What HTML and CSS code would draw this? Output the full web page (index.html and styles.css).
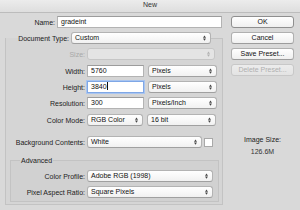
FILE: index.html
```html
<!DOCTYPE html>
<html>
<head>
<meta charset="utf-8">
<link rel="stylesheet" href="styles.css">
</head>
<body>
<div class="window">
  <div class="titlebar">New</div>
  <div class="content">
    <div class="form">
      <div class="name-row">
        <span class="lbl name-lbl">Name:</span>
        <div class="input name-input">gradeint</div>
      </div>
      <fieldset class="group doc">
        <legend class="doc-legend">
          <span class="lbl doc-lbl">Document Type:</span>
          <span class="select doctype">Custom<svg class="arr" viewBox="0 0 4 7"><path d="M0 3L2 0L4 3Z M0 4L2 7L4 4Z"/></svg></span>
        </legend>
        <div class="rows">
          <div class="row">
            <span class="lbl dim">Size:</span>
            <span class="select disabled w-size"><svg class="arr" viewBox="0 0 4 7"><path d="M0 3L2 0L4 3Z M0 4L2 7L4 4Z"/></svg></span>
          </div>
          <div class="row gap5">
            <span class="lbl">Width:</span>
            <div class="input w-num">5760</div>
            <span class="select w-unit">Pixels<svg class="arr" viewBox="0 0 4 7"><path d="M0 3L2 0L4 3Z M0 4L2 7L4 4Z"/></svg></span>
          </div>
          <div class="row">
            <span class="lbl">Height:</span>
            <div class="input w-num focus">3840<span class="caret"></span></div>
            <span class="select w-unit">Pixels<svg class="arr" viewBox="0 0 4 7"><path d="M0 3L2 0L4 3Z M0 4L2 7L4 4Z"/></svg></span>
          </div>
          <div class="row">
            <span class="lbl">Resolution:</span>
            <div class="input w-num">300</div>
            <span class="select w-unit">Pixels/Inch<svg class="arr" viewBox="0 0 4 7"><path d="M0 3L2 0L4 3Z M0 4L2 7L4 4Z"/></svg></span>
          </div>
          <div class="row gap5">
            <span class="lbl">Color Mode:</span>
            <span class="select w-mode">RGB Color<svg class="arr" viewBox="0 0 4 7"><path d="M0 3L2 0L4 3Z M0 4L2 7L4 4Z"/></svg></span>
            <span class="select w-bit">16 bit<svg class="arr" viewBox="0 0 4 7"><path d="M0 3L2 0L4 3Z M0 4L2 7L4 4Z"/></svg></span>
          </div>
          <div class="row gap10">
            <span class="lbl">Background Contents:</span>
            <span class="select w-bg">White<svg class="arr" viewBox="0 0 4 7"><path d="M0 3L2 0L4 3Z M0 4L2 7L4 4Z"/></svg></span>
            <span class="swatch"></span>
          </div>
        </div>
        <fieldset class="group adv">
          <legend class="adv-legend">Advanced</legend>
          <div class="rows">
            <div class="row">
              <span class="lbl adv-lbl">Color Profile:</span>
              <span class="select w-adv">Adobe RGB (1998)<svg class="arr" viewBox="0 0 4 7"><path d="M0 3L2 0L4 3Z M0 4L2 7L4 4Z"/></svg></span>
            </div>
            <div class="row">
              <span class="lbl adv-lbl">Pixel Aspect Ratio:</span>
              <span class="select w-adv">Square Pixels<svg class="arr" viewBox="0 0 4 7"><path d="M0 3L2 0L4 3Z M0 4L2 7L4 4Z"/></svg></span>
            </div>
          </div>
        </fieldset>
      </fieldset>
    </div>
    <div class="side">
      <button class="btn default">OK</button>
      <button class="btn">Cancel</button>
      <button class="btn">Save Preset...</button>
      <button class="btn disabled">Delete Preset...</button>
      <div class="imgsize">
        <div>Image Size:</div>
        <div class="imgval">126.6M</div>
      </div>
    </div>
  </div>
</div>
</body>
</html>
```

FILE: styles.css
```css
html, body {
  margin: 0;
  padding: 0;
}
body {
  width: 300px;
  height: 210px;
  overflow: hidden;
  background: #d9d9d9;
  font-family: "Liberation Sans", Arial, sans-serif;
  font-size: 7px;
  color: #222;
}
.window {
  width: 300px;
  height: 210px;
}
.titlebar {
  height: 12px;
  line-height: 10px;
  text-align: center;
  color: #333;
  background: linear-gradient(#ececec, #dedede);
  border-bottom: 1px solid #bcbcbc;
}
.content {
  display: flex;
  padding-top: 3px;
}
.form {
  width: 224px;
  flex: none;
}
.lbl {
  text-align: right;
  white-space: nowrap;
  flex: none;
}
.dim {
  color: #a8a8a8;
}
.name-row {
  display: flex;
  align-items: center;
  gap: 2px;
  height: 12px;
}
.name-lbl {
  width: 55px;
}
.input {
  box-sizing: border-box;
  height: 12px;
  line-height: 10px;
  background: #fff;
  border: 1px solid #b3b3b3;
  border-top-color: #9c9c9c;
  padding-left: 3px;
  color: #111;
  flex: none;
  position: relative;
}
.name-input {
  width: 165px;
}
.input.focus {
  border-color: #7fa7e6;
  box-shadow: 0 0 0 1px #a9c5f0;
}
.caret {
  display: inline-block;
  width: 1px;
  height: 8px;
  background: #111;
  vertical-align: -1px;
}
.group {
  margin: 0;
  padding: 0;
  min-width: 0;
  box-sizing: border-box;
  border: 1px solid #c3c3c3;
  background: rgba(0, 0, 0, 0.015);
}
.doc {
  margin: 4px 0 0 5px;
  width: 218px;
  padding-bottom: 2px;
}
.doc-legend {
  display: flex;
  align-items: center;
  gap: 2px;
  padding: 0;
  margin-left: 0;
}
.doc-lbl {
  width: 63px;
}
.select {
  box-sizing: border-box;
  height: 12px;
  line-height: 10px;
  border: 1px solid #b3b3b3;
  border-bottom-color: #a0a0a0;
  border-radius: 3px;
  background: linear-gradient(#ffffff, #f1f1f1);
  padding-left: 3px;
  padding-right: 10px;
  color: #111;
  position: relative;
  flex: none;
  white-space: nowrap;
  overflow: hidden;
}
.arr {
  position: absolute;
  right: 4px;
  top: 2px;
  width: 3px;
  height: 6px;
  fill: #444;
}
.select.disabled {
  background: #e4e4e4;
  border-color: #c6c6c6;
}
.select.disabled .arr {
  fill: #b0b0b0;
}
.doctype {
  width: 140px;
}
.rows {
  display: flex;
  flex-direction: column;
  gap: 4px;
}
.doc > .rows {
  padding-top: 4px;
}
.row {
  display: flex;
  align-items: center;
  gap: 2px;
  height: 12px;
}
.row .lbl {
  width: 79px;
}
.gap5 {
  margin-top: 1px;
}
.gap10 {
  margin-top: 6px;
}
.w-size {
  width: 128px;
}
.w-num {
  width: 57px;
  margin-right: 2px;
}
.w-unit {
  width: 69px;
}
.w-mode {
  width: 56px;
  margin-right: 2px;
}
.w-bit {
  width: 69px;
}
.w-bg {
  width: 115px;
}
.swatch {
  width: 9px;
  height: 9px;
  box-sizing: border-box;
  background: #fff;
  border: 1px solid #a9a9a9;
  flex: none;
}
.adv {
  margin: 8px 0 0 4px;
  width: 209px;
  padding-bottom: 3px;
}
.adv-legend {
  padding: 0 1px;
  margin-left: 9px;
  line-height: 9px;
}
.adv > .rows {
  padding-top: 5px;
}
.adv .row .lbl {
  width: 74px;
}
.w-adv {
  width: 126px;
}
.side {
  margin-left: 7px;
  width: 63px;
  display: flex;
  flex-direction: column;
  gap: 4px;
}
.btn {
  box-sizing: border-box;
  height: 12px;
  width: 63px;
  margin: 0;
  padding: 0;
  font-family: inherit;
  font-size: 7px;
  line-height: 10px;
  color: #111;
  border: 1px solid #b0b0b0;
  border-bottom-color: #9c9c9c;
  border-radius: 3px;
  background: linear-gradient(#ffffff, #f0f0f0);
}
.btn.default {
  border-color: #8f8f8f;
}
.btn.disabled {
  color: #b0b0b0;
  background: linear-gradient(#ececec, #e3e3e3);
  border-color: #c8c8c8;
}
.imgsize {
  margin-top: 54px;
  text-align: center;
  color: #222;
  line-height: 12px;
}
.imgval {
  color: #333;
}
```
